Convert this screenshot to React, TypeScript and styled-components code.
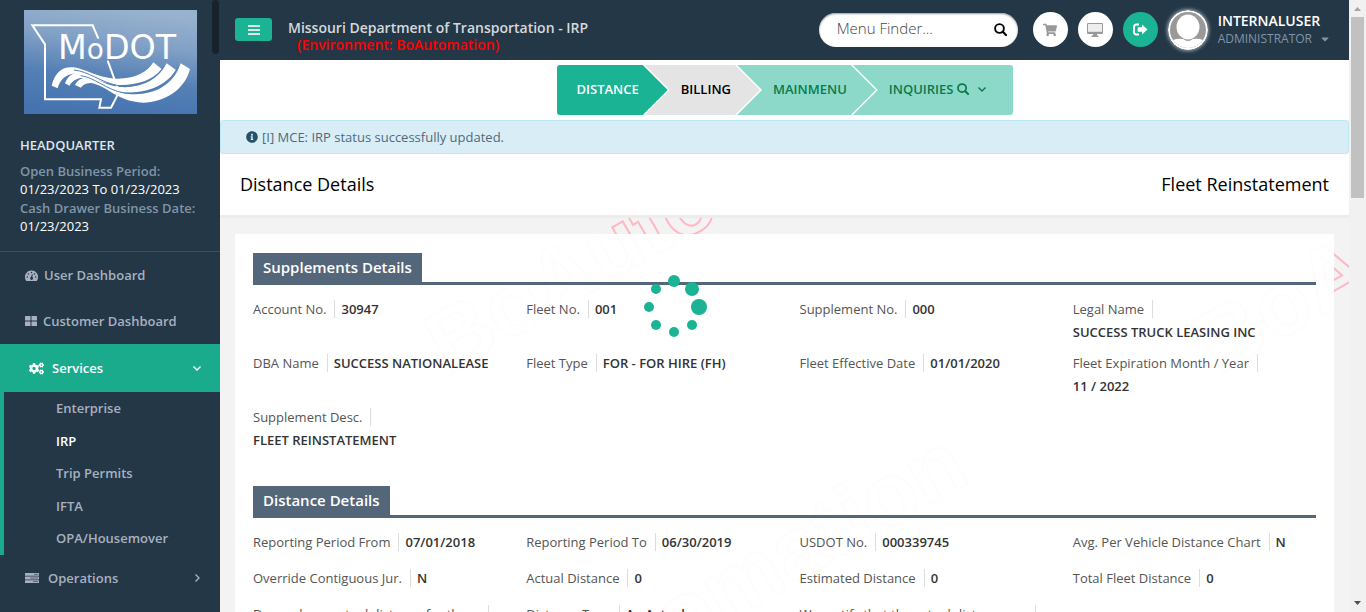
import React from "react";
import styled, { createGlobalStyle, css } from "styled-components";
import { FaCaretDown, FaCogs, FaInfoCircle, FaShoppingCart } from "react-icons/fa";

const green = "#1ab394";
const navy = "#243746";
const slate = "#54667a";

const GlobalStyle = createGlobalStyle`
  *, *::before, *::after { box-sizing: border-box; }
  body {
    margin: 0;
    background: #f3f3f4;
    font-family: "Open Sans", "Liberation Sans", sans-serif;
    font-size: 13px;
    color: #333;
  }
  a { color: inherit; text-decoration: none; }
  ul, dl, dd, h1, h2, p { margin: 0; padding: 0; }
  ul { list-style: none; }
  button { font: inherit; border: 0; padding: 0; cursor: pointer; }
`;

const Shell = styled.div`
  display: grid;
  grid-template-columns: 220px minmax(0, 1fr) 17px;
  height: 100vh;
  overflow: hidden;
`;

/* Sidebar */

const Sidebar = styled.aside`
  position: relative;
  background: ${navy};
  color: #a7b1c2;
  font-weight: 600;
  overflow: hidden;
`;

const SidebarThumb = styled.span`
  position: absolute;
  top: 0;
  right: 1px;
  width: 7px;
  height: 54px;
  border-radius: 4px;
  background: #17222c;
`;

const Profile = styled.div`
  padding: 10px 20px 15px;
  border-bottom: 1px solid #3b4f60;
`;

const Logo = styled.svg`
  display: block;
  width: 173px;
  height: 104px;
  margin: 0 4px 22px;
`;

const Office = styled.p`
  line-height: 18px;
  margin-bottom: 8px;
  color: #dfe4ed;
`;

const Period = styled.dl`
  line-height: 18px;
  white-space: nowrap;
`;

const PeriodLabel = styled.dt`
  color: #8095a8;
`;

const PeriodValue = styled.dd`
  margin-bottom: 1px;
  font-weight: 400;
  color: #fff;
`;

const MenuLink = styled.a<{ $active?: boolean; $wide?: boolean }>`
  display: flex;
  align-items: center;
  height: 46px;
  padding: 0 18px 0 25px;
  gap: ${(p) => (p.$wide ? 9 : 6)}px;
  ${(p) =>
    p.$active &&
    css`
      height: 48px;
      padding-left: 29px;
      gap: 8px;
      background: #1aab8c;
      color: #fff;
    `}
`;

const MenuText = styled.span`
  flex: 1;
`;

const Submenu = styled.ul`
  display: flex;
  flex-direction: column;
  min-height: 163px;
  border-left: 4px solid #1aab8c;
`;

const SubItem = styled.li`
  flex: 1;
`;

const SubLink = styled.a<{ $current?: boolean }>`
  display: block;
  padding-left: 52px;
  line-height: 32px;
  color: ${(p) => (p.$current ? "#fff" : "inherit")};
`;

/* Header */

const Main = styled.main`
  display: flex;
  flex-direction: column;
  min-width: 0;
  overflow: hidden;
`;

const TopBar = styled.header`
  flex: none;
  display: flex;
  align-items: center;
  height: 60px;
  padding: 0 18px 1px 15px;
  background: ${navy};
`;

const Toggle = styled.button`
  display: grid;
  place-items: center;
  width: 37px;
  height: 23px;
  border-radius: 3px;
  background: ${green};
`;

const Brand = styled.div`
  flex: 1;
  margin: 12px 0 0 16px;
  font-size: 14px;
  font-weight: 600;
  line-height: 17px;
  color: #d5d9dc;
`;

const Environment = styled.p`
  padding-left: 9px;
  color: #f00;
`;

const Finder = styled.form`
  display: flex;
  align-items: center;
  width: 199px;
  height: 34px;
  margin-right: 15px;
  padding: 0 11px 0 18px;
  border-radius: 17px;
  background: #fff;
  box-shadow: inset 0 1px 2px #999;
`;

const FinderInput = styled.input`
  flex: 1;
  min-width: 0;
  border: 0;
  padding: 0 0 3px;
  outline: 0;
  background: none;
  font: 300 15px "Open Sans", sans-serif;
  &::placeholder { color: #444; opacity: 1; }
`;

const FinderButton = styled.button`
  display: flex;
  background: none;
  color: #000;
`;

const RoundButton = styled.button<{ $green?: boolean }>`
  display: grid;
  place-items: center;
  width: 35px;
  height: 35px;
  margin-right: 10px;
  border-radius: 50%;
  background: ${(p) => (p.$green ? green : "#fff")};
  color: ${(p) => (p.$green ? "#fff" : "#999")};
`;

const Avatar = styled.svg`
  width: 40px;
  height: 40px;
  border-radius: 50%;
  box-shadow: 0 0 4px #dfe6ee;
`;

const Account = styled.button`
  margin-left: 10px;
  background: none;
  text-align: left;
  color: #8095a8;
  font-size: 12px;
  line-height: 18px;
`;

const UserName = styled.strong`
  display: block;
  font-size: 14px;
  font-weight: 600;
  line-height: 19px;
  color: #fff;
`;

const Role = styled.span`
  display: flex;
  align-items: center;
  gap: 7px;
`;

/* Step navigation */

const arrow = "polygon(0 0, calc(100% - 25px) 0, 100% 50%, calc(100% - 25px) 100%, 0 100%)";

const Steps = styled.ul`
  flex: none;
  display: flex;
  justify-content: center;
  padding: 5px 0;
  background: #fff;
`;

const Step = styled.li<{ $order: number; $last?: boolean }>`
  position: relative;
  z-index: ${(p) => 5 - p.$order};
  padding-right: ${(p) => (p.$last ? 0 : 2)}px;
  background: #fff;
  clip-path: ${(p) => (p.$last ? "none" : arrow)};
  & + & { margin-left: -25px; }
`;

const tones = {
  active: css`background: ${green}; color: #fff;`,
  done: css`background: #e4e4e4; color: #000;`,
  open: css`background: #8cd9c9; color: #0b7a4b;`,
};

const StepLink = styled.a<{ $tone: keyof typeof tones; $last?: boolean }>`
  display: flex;
  align-items: center;
  gap: 3px;
  height: 50px;
  padding: 0 ${(p) => (p.$last ? 26 : 29)}px 2px 36px;
  font-weight: 600;
  clip-path: ${(p) => (p.$last ? "none" : arrow)};
  border-radius: ${(p) => (p.$last ? "0 3px 3px 0" : "0")};
  ${(p) => tones[p.$tone]}
  ${Step}:first-child & { padding-left: 20px; border-radius: 3px 0 0 3px; }
  & svg + svg { margin-left: 5px; }
`;

/* Page */

const Notice = styled.div`
  flex: none;
  display: flex;
  align-items: center;
  gap: 4px;
  height: 34px;
  padding: 0 25px;
  border: 1px solid #bce8f1;
  border-radius: 4px;
  background: #d9edf7;
  color: #245269;
`;

const NoticeText = styled.span`
  color: #4c6b7c;
`;

const TitleBar = styled.div`
  flex: none;
  position: relative;
  z-index: 1;
  display: flex;
  justify-content: space-between;
  padding: 18px 20px;
  border-bottom: 3px solid #ececec;
  background: #fff;
  color: #000;
`;

const Title = styled.h1`
  font-size: 18px;
  font-weight: 400;
  line-height: 25px;
`;

const Content = styled.div`
  position: relative;
  flex: 1;
  min-height: 0;
  padding: 16px 15px 0;
  overflow: hidden;
`;

const Watermark = styled.span<{ $x: number; $y: number }>`
  position: absolute;
  left: ${(p) => p.$x}px;
  top: ${(p) => p.$y}px;
  font: 700 88px/88px "Liberation Sans", sans-serif;
  white-space: nowrap;
  color: transparent;
  -webkit-text-stroke: 2px #ffb8c3;
  transform: rotate(-30deg);
  transform-origin: 0 100%;
  pointer-events: none;
`;

const Panel = styled.div`
  position: relative;
  padding: 19px 18px;
  min-height: 800px;
  background: rgba(255, 255, 255, 0.95);
`;

const Section = styled.section`
  & + & { margin-top: 24px; }
`;

const SectionHead = styled.div`
  display: flex;
  margin-bottom: 15px;
  border-bottom: 3px solid ${slate};
`;

const SectionTitle = styled.h2`
  padding: 0 10px;
  background: ${slate};
  color: #fff;
  font-size: 15px;
  font-weight: 600;
  line-height: 29px;
`;

const Fields = styled.dl`
  display: grid;
  grid-template-columns: repeat(4, minmax(0, 1fr));
  column-gap: 30px;
`;

const Field = styled.div`
  display: flex;
  flex-wrap: wrap;
  align-content: flex-start;
  gap: 5px 0;
  min-height: 36px;
  padding-bottom: 13px;
  line-height: 18px;
`;

const FieldLabel = styled.dt`
  max-width: 236px;
  margin-right: 6px;
  padding-right: 8px;
  border-right: 1px solid #ddd;
  color: #555;
`;

const FieldValue = styled.dd`
  font-weight: 600;
  color: #333;
`;

const Spinner = styled.svg`
  position: absolute;
  z-index: 2;
  left: calc(50% - 142px);
  top: 57px;
  width: 64px;
  height: 64px;
  overflow: visible;
`;

/* Page scroll bar */

const ScrollTrack = styled.div`
  display: flex;
  flex-direction: column;
  justify-content: space-between;
  align-items: center;
  background: #f1f1f1;
`;

const ScrollThumb = styled.div`
  width: 13px;
  height: 181px;
  margin-bottom: auto;
  background: #c1c1c1;
`;

const ScrollArrow = styled.svg`
  display: block;
  width: 17px;
  height: 17px;
`;

/* Icons */

const DashboardIcon = () => (
  <svg width="13" height="11" viewBox="0 0 26 22" aria-hidden="true">
    <path fill="currentColor" d="M13 1A13 13 0 0 0 2 21Q2 22 3 22H23Q24 22 24 21A13 13 0 0 0 13 1Z" />
    <g fill={navy}>
      <circle cx="4.500" cy="14" r="1.600" />
      <circle cx="7" cy="8" r="1.600" />
      <circle cx="13" cy="5" r="1.600" />
      <circle cx="19" cy="8" r="1.600" />
      <circle cx="21.500" cy="14" r="1.600" />
      <path d="M14 8L15.500 8.500L14.500 14A3 3 0 1 1 12 14Z" />
    </g>
  </svg>
);

const TilesIcon = () => (
  <svg width="12" height="10" viewBox="0 0 12 10" fill="currentColor" aria-hidden="true">
    <rect width="5.500" height="4.500" rx=".6" />
    <rect x="6.500" width="5.500" height="4.500" rx=".6" />
    <rect y="5.500" width="5.500" height="4.500" rx=".6" />
    <rect x="6.500" y="5.500" width="5.500" height="4.500" rx=".6" />
  </svg>
);

const ServerIcon = () => (
  <svg width="14" height="10" viewBox="0 0 14 10" aria-hidden="true">
    <g fill="currentColor">
      <rect width="14" height="2.800" rx=".5" />
      <rect y="3.600" width="14" height="2.800" rx=".5" />
      <rect y="7.200" width="14" height="2.800" rx=".5" />
    </g>
    <path d="M9 1.400H13M5 5H13M8 8.600H13" stroke={navy} strokeWidth=".6" />
  </svg>
);

const Chevron = ({ right }: { right?: boolean }) => (
  <svg width="10" height="10" viewBox="0 0 10 10" fill="none" stroke="currentColor" strokeWidth="1.400" aria-hidden="true">
    <path d={right ? "M3.500 1.500L7 5L3.500 8.500" : "M1.500 3.500L5 7L8.500 3.500"} />
  </svg>
);

const BarsIcon = () => (
  <svg width="12" height="10" viewBox="0 0 12 10" aria-hidden="true">
    <path d="M0 1H12M0 5H12M0 9H12" stroke="#dfe9e6" strokeWidth="1.800" />
  </svg>
);

const SearchIcon = ({ size = 12 }: { size?: number }) => (
  <svg width={size} height={size} viewBox="0 0 13 13" fill="none" stroke="currentColor" aria-hidden="true">
    <circle cx="5.500" cy="5.500" r="4.400" strokeWidth="1.900" />
    <path d="M8.800 8.800L12 12" strokeWidth="2.200" strokeLinecap="round" />
  </svg>
);

const MonitorIcon = () => (
  <svg width="16" height="14" viewBox="0 0 16 14" aria-hidden="true">
    <path
      fill="#999"
      fillRule="evenodd"
      d="M1 0H15Q16 0 16 1V10Q16 11 15 11H10V12.500H11.500V14H4.500V12.500H6V11H1Q0 11 0 10V1Q0 0 1 0ZM1 1V8.500H15V1Z"
    />
    <path fill="#eee" d="M1 1H15V8.500H1Z" />
  </svg>
);

const LogoutIcon = () => (
  <svg width="15" height="13" viewBox="0 0 15 13" aria-hidden="true">
    <path d="M6 1.500H3.500Q1 1.500 1 4V9Q1 11.500 3.500 11.500H6" fill="none" stroke="#fff" strokeWidth="1.800" />
    <path d="M9 1.500L14.500 6.500L9 11.500V8.700H4.700V4.300H9Z" fill="#fff" />
  </svg>
);

const ModotLogo = () => (
  <Logo viewBox="72 30 519 312" role="img" aria-label="MoDOT">
    <defs>
      <linearGradient id="sky" x1="0.600" y1="0" x2="0.400" y2="1">
        <stop offset="0" stopColor="#98b2ce" />
        <stop offset=".3" stopColor="#82a1c6" />
        <stop offset=".65" stopColor="#5580b5" />
        <stop offset="1" stopColor="#4573b0" />
      </linearGradient>
    </defs>
    <rect x="72" y="30" width="519" height="312" fill="url(#sky)" />
    <path
      d="M295 116L278 76H97L135 133V298H303L298 323H333L350 290L357 275L323 182"
      fill="none"
      stroke="#fff"
      strokeWidth="6"
    />
    <text
      x="174"
      y="177"
      fill="#fff"
      fontFamily="DejaVu Sans, sans-serif"
      fontWeight="400"
      fontSize="100"
    >
      M<tspan fontSize="84">o</tspan>DOT
    </text>
    <g fill="#fff">
      <path d="M155 257C165 215 190 198 220 202C255 206 290 232 345 236C400 238 440 220 460 187L485 207C455 245 400 258 345 254C290 246 250 218 215 222C195 226 180 240 173 265Z" />
      <path d="M195 250C203 228 218 217 238 218C275 224 310 256 360 261C425 265 475 240 500 190L528 210C495 262 430 282 365 277C310 268 270 230 240 234C225 238 215 245 208 257Z" />
      <path d="M225 255C232 240 245 232 262 234C300 240 330 275 380 281C450 290 520 262 542 190L570 207C555 270 490 308 430 308C350 305 320 255 272 249C255 250 248 256 243 263Z" />
    </g>
    <path
      d="M222 210C265 214 300 246 355 257C420 263 470 238 492 198M242 227C285 232 315 268 372 279C440 286 505 260 534 200"
      fill="none"
      stroke="#5580b5"
      strokeWidth="3"
    />
  </Logo>
);

const supplement = [
  ["Account No.", "30947"],
  ["Fleet No.", "001"],
  ["Supplement No.", "000"],
  ["Legal Name", "SUCCESS TRUCK LEASING INC"],
  ["DBA Name", "SUCCESS NATIONALEASE"],
  ["Fleet Type", "FOR - FOR HIRE (FH)"],
  ["Fleet Effective Date", "01/01/2020"],
  ["Fleet Expiration Month / Year", "11 / 2022"],
  ["Supplement Desc.", "FLEET REINSTATEMENT"],
];

const distance = [
  ["Reporting Period From", "07/01/2018"],
  ["Reporting Period To", "06/30/2019"],
  ["USDOT No.", "000339745"],
  ["Avg. Per Vehicle Distance Chart", "N"],
  ["Override Contiguous Jur.", "N"],
  ["Actual Distance", "0"],
  ["Estimated Distance", "0"],
  ["Total Fleet Distance", "0"],
  ["Do you have actual distance for the reporting period?", "N"],
  ["Distance Type", "A - Actual"],
  ["We certify that the actual distance reported is correct", "N"],
];

const spinnerDots = [
  [31, 6, 6],
  [49, 14, 7],
  [56, 32, 8],
  [49, 50, 5],
  [31, 57, 5],
  [13, 50, 5],
  [6, 32, 5],
  [13, 14, 5],
];

const FieldSection = ({ title, rows }: { title: string; rows: string[][] }) => (
  <Section>
    <SectionHead>
      <SectionTitle>{title}</SectionTitle>
    </SectionHead>
    <Fields>
      {rows.map(([label, value]) => (
        <Field key={label}>
          <FieldLabel>{label}</FieldLabel>
          <FieldValue>{value}</FieldValue>
        </Field>
      ))}
    </Fields>
  </Section>
);

export default function App() {
  return (
    <>
      <GlobalStyle />
      <Shell>
        <Sidebar>
          <SidebarThumb />
          <Profile>
            <ModotLogo />
            <Office>HEADQUARTER</Office>
            <Period>
              <PeriodLabel>Open Business Period:</PeriodLabel>
              <PeriodValue>01/23/2023 To 01/23/2023</PeriodValue>
              <PeriodLabel>Cash Drawer Business Date:</PeriodLabel>
              <PeriodValue>01/23/2023</PeriodValue>
            </Period>
          </Profile>
          <nav>
            <MenuLink href="#user"><DashboardIcon /><MenuText>User Dashboard</MenuText></MenuLink>
            <MenuLink href="#customer"><TilesIcon /><MenuText>Customer Dashboard</MenuText></MenuLink>
            <MenuLink href="#services" $active>
              <FaCogs size={15} /><MenuText>Services</MenuText><Chevron />
            </MenuLink>
            <Submenu>
              {["Enterprise", "IRP", "Trip Permits", "IFTA", "OPA/Housemover"].map((name) => (
                <SubItem key={name}>
                  <SubLink href={`#${name}`} $current={name === "IRP"}>{name}</SubLink>
                </SubItem>
              ))}
            </Submenu>
            <MenuLink href="#operations" $wide>
              <ServerIcon /><MenuText>Operations</MenuText><Chevron right />
            </MenuLink>
          </nav>
        </Sidebar>

        <Main>
          <TopBar>
            <Toggle aria-label="Toggle menu"><BarsIcon /></Toggle>
            <Brand>
              <p>Missouri Department of Transportation - IRP</p>
              <Environment>(Environment: BoAutomation)</Environment>
            </Brand>
            <Finder>
              <FinderInput aria-label="Menu finder" placeholder="Menu Finder..." />
              <FinderButton type="button" aria-label="Search"><SearchIcon size={13} /></FinderButton>
            </Finder>
            <RoundButton aria-label="Cart"><FaShoppingCart size={14} /></RoundButton>
            <RoundButton aria-label="Display"><MonitorIcon /></RoundButton>
            <RoundButton $green aria-label="Log out"><LogoutIcon /></RoundButton>
            <Avatar viewBox="0 0 40 40" aria-hidden="true">
              <circle cx="20" cy="20" r="20" fill="#fff" />
              <circle cx="20" cy="20" r="18" fill="#999" />
              <ellipse cx="20" cy="17" rx="11.500" ry="12.500" fill="#fff" />
              <path d="M5 30Q10 28 15 29Q20 33 25 29Q30 28 35 30A18 18 0 0 1 5 30Z" fill="#fff" />
            </Avatar>
            <Account>
              <UserName>INTERNALUSER</UserName>
              <Role>ADMINISTRATOR <FaCaretDown size={12} /></Role>
            </Account>
          </TopBar>

          <Steps>
            <Step $order={0}><StepLink href="#distance" $tone="active">DISTANCE</StepLink></Step>
            <Step $order={1}><StepLink href="#billing" $tone="done">BILLING</StepLink></Step>
            <Step $order={2}><StepLink href="#mainmenu" $tone="open">MAINMENU</StepLink></Step>
            <Step $order={3} $last>
              <StepLink href="#inquiries" $tone="open" $last>
                INQUIRIES <SearchIcon /> <Chevron />
              </StepLink>
            </Step>
          </Steps>

          <Notice role="status">
            <FaInfoCircle size={12} />
            <NoticeText>[I] MCE: IRP status successfully updated.</NoticeText>
          </Notice>

          <TitleBar>
            <Title>Distance Details</Title>
            <Title as="p">Fleet Reinstatement</Title>
          </TitleBar>

          <Content>
            <Watermark $x={235} $y={82} aria-hidden="true">BoAutomation</Watermark>
            <Watermark $x={1005} $y={82} aria-hidden="true">BoAutomation</Watermark>
            <Watermark $x={235} $y={490} aria-hidden="true">BoAutomation</Watermark>
            <Panel>
              <FieldSection title="Supplements Details" rows={supplement} />
              <FieldSection title="Distance Details" rows={distance} />
            </Panel>
            <Spinner viewBox="0 0 64 64" role="img" aria-label="Loading" fill={green}>
              {spinnerDots.map(([cx, cy, r]) => (
                <circle key={`${cx}-${cy}`} cx={cx} cy={cy} r={r} />
              ))}
            </Spinner>
          </Content>
        </Main>

        <ScrollTrack aria-hidden="true">
          <ScrollArrow viewBox="0 0 17 17"><path d="M5 11L8.500 7L12 11Z" fill="#a3a3a3" /></ScrollArrow>
          <ScrollThumb />
          <ScrollArrow viewBox="0 0 17 17"><path d="M5 6L8.500 10L12 6Z" fill="#505050" /></ScrollArrow>
        </ScrollTrack>
      </Shell>
    </>
  );
}
